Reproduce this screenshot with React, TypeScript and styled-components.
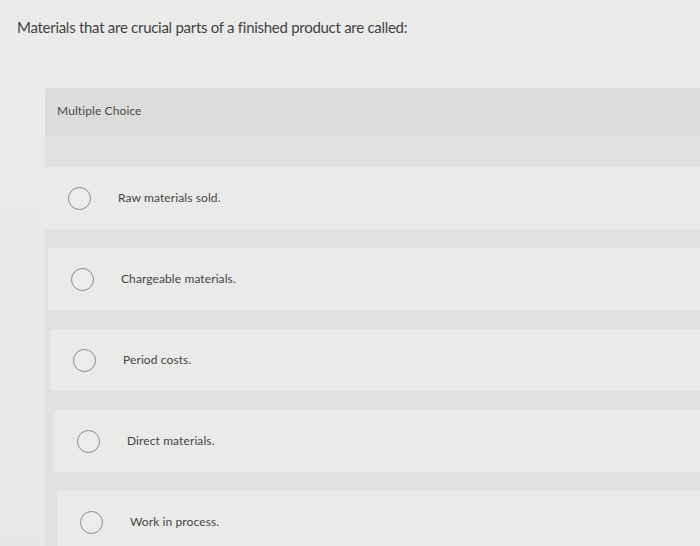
import React from "react";
import styled, { createGlobalStyle } from "styled-components";

const Global = createGlobalStyle`
  html, body { margin: 0; padding: 0; }
  body {
    background: #e9e9e7;
    font-family: Lato, "Open Sans", "Liberation Sans", sans-serif;
    color: #454545;
    width: 700px;
    height: 546px;
    overflow: hidden;
  }
`;

const Page = styled.div`
  display: flex;
  flex-direction: column;
  height: 546px;
  background: linear-gradient(180deg, #ebebea 0%, #e7e7e5 100%);
`;

const Question = styled.h1`
  margin: 0;
  padding: 17px 0 0 17px;
  font-size: 15px;
  line-height: 20px;
  font-weight: 400;
  letter-spacing: -0.28px;
  color: #434343;
`;

const Panel = styled.section`
  margin: 51px 0 0 45px;
  flex: 1;
  display: flex;
  flex-direction: column;
  background: #e1e1df;
  border-bottom: 2px solid #f6f6f4;
`;

const PanelHeader = styled.div`
  height: 49px;
  box-sizing: border-box;
  padding: 15px 0 0 12px;
  background: #dcdcdb;
  font-size: 12px;
  line-height: 16px;
  letter-spacing: 0.1px;
  color: #4a4a4a;
`;

const Options = styled.div`
  display: flex;
  flex-direction: column;
  gap: 19px;
  padding-top: 30px;
`;

const Card = styled.label<{ $shift: number }>`
  display: flex;
  align-items: center;
  height: 62px;
  margin-left: ${(p) => p.$shift}px;
  padding-left: 23px;
  background: #eaeae8;
  cursor: pointer;
`;

const Radio = styled.span`
  width: 23px;
  height: 23px;
  border-radius: 50%;
  border: 1.5px solid #8a8a8a;
  box-sizing: border-box;
  flex: none;
  background: #ececea;
`;

const OptionText = styled.span`
  margin-left: 27px;
  font-size: 12px;
  line-height: 16px;
  letter-spacing: 0.1px;
  color: #454545;
`;

const options = [
  { text: "Raw materials sold.", shift: 0 },
  { text: "Chargeable materials.", shift: 3 },
  { text: "Period costs.", shift: 5 },
  { text: "Direct materials.", shift: 9 },
  { text: "Work in process.", shift: 12 },
];

export default function App() {
  return (
    <>
      <Global />
      <Page>
        <Question>Materials that are crucial parts of a finished product are called:</Question>
        <Panel>
          <PanelHeader>Multiple Choice</PanelHeader>
          <Options>
            {options.map((o) => (
              <Card key={o.text} $shift={o.shift}>
                <Radio />
                <OptionText>{o.text}</OptionText>
              </Card>
            ))}
          </Options>
        </Panel>
      </Page>
    </>
  );
}
